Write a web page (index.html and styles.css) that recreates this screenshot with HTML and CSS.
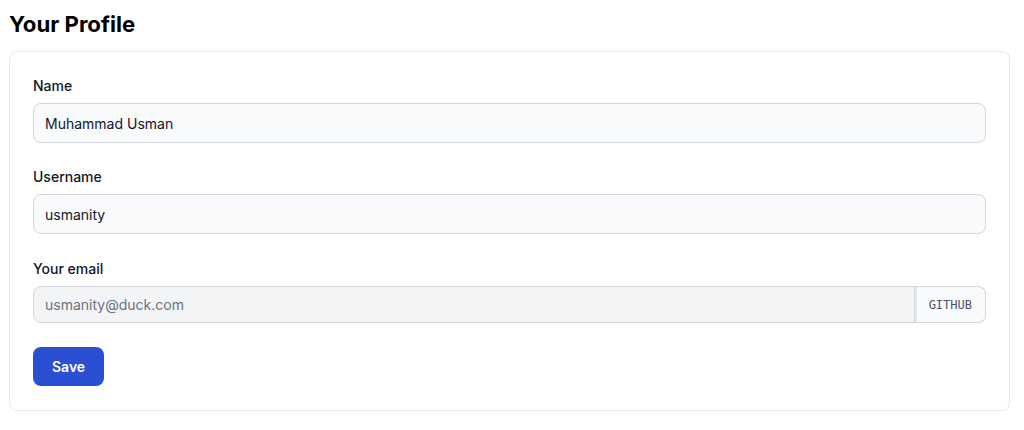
FILE: index.html
```html
<!DOCTYPE html>
<html>
<head>
<meta charset="utf-8">
<link rel="stylesheet" href="styles.css">
</head>
<body>
<h1 class="title">Your Profile</h1>
<form class="card">
  <div class="field">
    <label class="label" for="name">Name</label>
    <input class="input" id="name" type="text" value="Muhammad Usman">
  </div>
  <div class="field">
    <label class="label" for="username">Username</label>
    <input class="input" id="username" type="text" value="usmanity">
  </div>
  <div class="field field-email">
    <label class="label" for="email">Your email</label>
    <div class="group">
      <input class="input input-disabled" id="email" type="email" value="usmanity@duck.com" disabled>
      <span class="addon">GITHUB</span>
    </div>
  </div>
  <div class="actions">
    <button class="btn" type="button">Save</button>
  </div>
</form>
</body>
</html>
```
FILE: styles.css
```css
* { box-sizing: border-box; }
body {
  margin: 0;
  padding: 9px 14px 0 9px;
  font-family: Inter, "Noto Sans", sans-serif;
  color: #111827;
  background: #fff;
}
.title {
  margin: 0 0 13px 0;
  font-size: 22.2px;
  line-height: 29px;
  font-weight: 700;
  color: #000;
}
.card {
  margin: 0;
  border: 1px solid #e5e7eb;
  border-radius: 8px;
  padding: 24px 23px 24px 23px;
  display: flex;
  flex-direction: column;
  gap: 24px;
}
.field {
  display: flex;
  flex-direction: column;
  gap: 7px;
}
.field-email { margin-top: 1px; }
.label {
  font-size: 14px;
  line-height: 20px;
  font-weight: 500;
  color: #111827;
}
.input {
  width: 100%;
  height: 40px;
  padding: 0 11px;
  border: 1px solid #d1d5db;
  border-radius: 8px;
  background: #f9fafb;
  font-family: inherit;
  font-size: 14px;
  color: #111827;
  outline: none;
}
.group {
  display: flex;
  height: 37px;
}
.input-disabled {
  height: 37px;
  flex: 1;
  background: #f3f4f6;
  color: #6b7280;
  border-radius: 8px 0 0 8px;
  -webkit-text-fill-color: #6b7280;
  opacity: 1;
}
.addon {
  display: flex;
  align-items: center;
  padding: 0 13px 0 14px;
  border: 1px solid #d1d5db;
  border-left: none;
  border-radius: 0 8px 8px 0;
  background: #f9fafb;
  font-family: "DejaVu Sans Mono", "Liberation Mono", monospace;
  font-size: 12px;
  color: #4b5563;
  box-shadow: inset 2px 0 0 #e5e7eb;
}
.actions { display: flex; }
.btn {
  height: 39px;
  padding: 0 19px;
  border: none;
  border-radius: 8px;
  background: #2a4fd3;
  color: #fff;
  font-family: inherit;
  font-size: 14px;
  font-weight: 600;
}
```
